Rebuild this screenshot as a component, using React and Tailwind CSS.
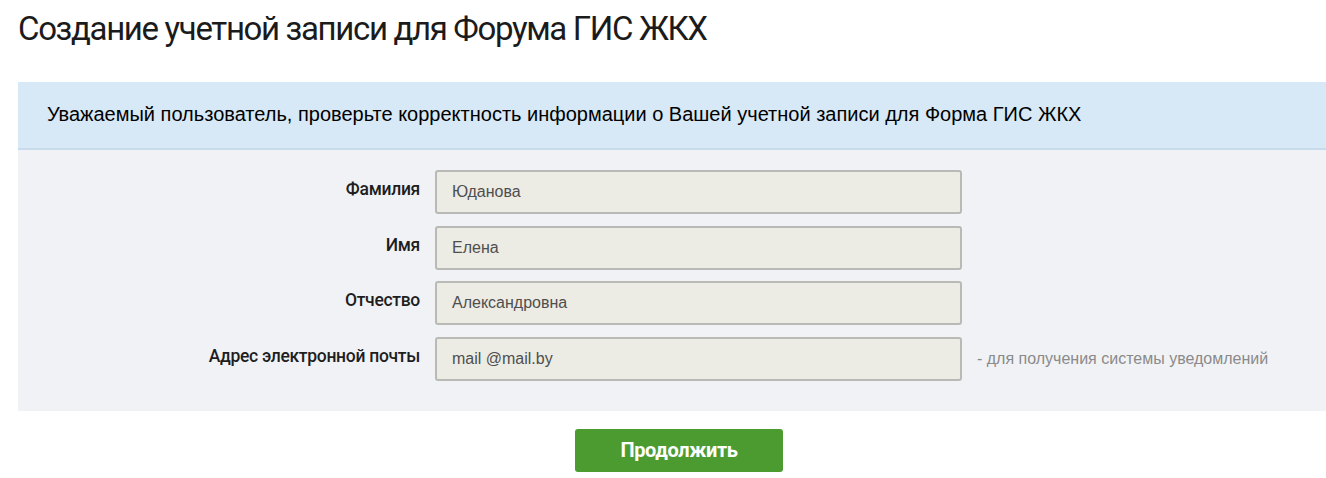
import React from "react";

const rows = [
  { label: "Фамилия", value: "Юданова" },
  { label: "Имя", value: "Елена" },
  { label: "Отчество", value: "Александровна" },
  { label: "Адрес электронной почты", value: "mail @mail.by", hint: "- для получения системы уведомлений" },
];

export default function App() {
  return (
    <div className="min-h-[478px] w-[1326px] bg-white font-['Liberation_Sans',Arial,sans-serif]">
      <h1 className="pl-[18px] pt-[10px] h-[82px] text-[33px] leading-[38px] tracking-[-1.35px] text-[#1b1b1b] font-['Roboto',sans-serif]">
        Создание учетной записи для Форума ГИС ЖКХ
      </h1>
      <div className="ml-[18px]">
        <div className="h-[68px] bg-[#d7e8f6] border-b-2 border-[#c8dbea] pl-[29px] flex items-center">
          <p className="text-[20px] leading-[24px] text-black pb-[2px]">
            Уважаемый пользователь, проверьте корректность информации о Вашей учетной записи для Форма ГИС ЖКХ
          </p>
        </div>
        <div className="bg-[#f1f2f6] pt-[20px] pb-[30px]">
          <div className="grid grid-cols-[402px_527px_auto] gap-x-[15px] gap-y-[11.5px] items-center">
            {rows.map((r) => (
              <React.Fragment key={r.label}>
                <div className="text-right text-[17.5px] font-medium tracking-[-0.3px] text-[#1e1e1e] font-['Roboto',sans-serif] pb-[5px]">
                  {r.label}
                </div>
                <div className="h-[44px] rounded-[3px] border-2 border-[#b9b9b6] bg-[#ecebe4] flex items-center pl-[15px] text-[16px] text-[#4f4f4f] font-['Liberation_Sans',Arial,sans-serif]">
                  {r.value}
                </div>
                <div className="text-[16px] text-[#8a8a8a] font-['Liberation_Sans',Arial,sans-serif]">
                  {r.hint || ""}
                </div>
              </React.Fragment>
            ))}
          </div>
        </div>
        <div className="pt-[18px] pl-[557px]">
          <button className="w-[208px] h-[43px] rounded-[3px] bg-[#4c9b30] text-white text-[20px] font-bold tracking-[-0.4px] font-['Roboto',sans-serif]">
            Продолжить
          </button>
        </div>
      </div>
    </div>
  );
}
